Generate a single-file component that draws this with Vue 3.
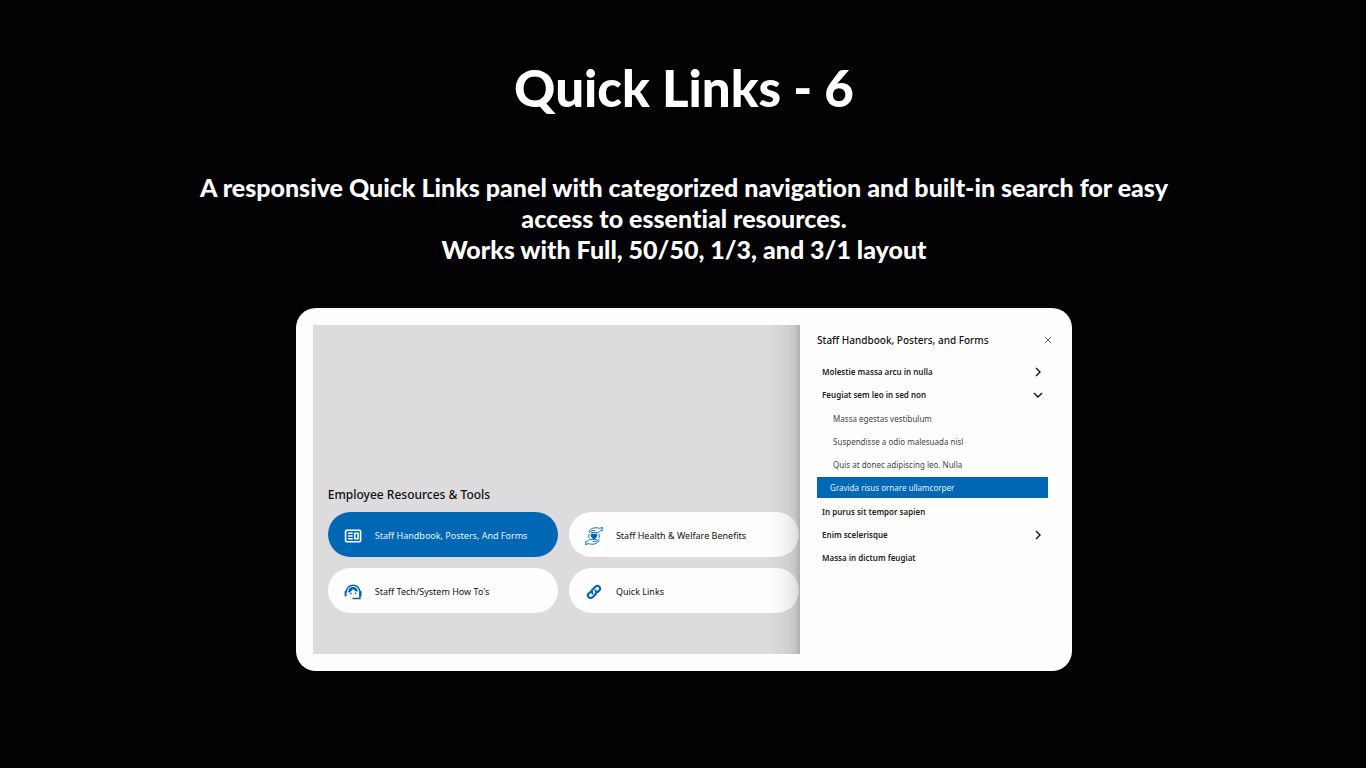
<script setup>
import { ref } from 'vue'

const tiles = ref([
  { icon: 'handbook', label: 'Staff Handbook, Posters, And Forms', active: true },
  { icon: 'health', label: 'Staff Health & Welfare Benefits' },
  { icon: 'support', label: "Staff Tech/System How To's" },
  { icon: 'link', label: 'Quick Links' },
])

const sections = ref([
  { label: 'Molestie massa arcu in nulla', expandable: true },
  {
    label: 'Feugiat sem leo in sed non',
    expandable: true,
    open: true,
    children: [
      { label: 'Massa egestas vestibulum' },
      { label: 'Suspendisse a odio malesuada nisl' },
      { label: 'Quis at donec adipiscing leo. Nulla' },
      { label: 'Gravida risus ornare ullamcorper', active: true },
    ],
  },
  { label: 'In purus sit tempor sapien' },
  { label: 'Enim scelerisque', expandable: true },
  { label: 'Massa in dictum feugiat' },
])
</script>

<template>
  <main class="page">
    <h1 class="title">Quick Links - 6</h1>
    <p class="intro">
      A responsive Quick Links panel with categorized navigation and built-in search for easy access to essential resources.<br />
      Works with Full, 50/50, 1/3, and 3/1 layout
    </p>

    <div class="card">
      <section class="resources">
        <h2 class="resources-title">Employee Resources &amp; Tools</h2>
        <div class="tiles">
          <button
            v-for="tile in tiles"
            :key="tile.label"
            type="button"
            class="tile"
            :class="{ active: tile.active }"
          >
            <svg v-if="tile.icon === 'handbook'" class="icon" viewBox="0 0 18 18" fill="none" stroke="currentColor">
              <rect x="1.6" y="3.3" width="15" height="11.4" rx="1" stroke-width="1.6" />
              <path d="M4 6.3h4.800M4 9h4.800M4 11.700h4.800" stroke-width="1.400" />
              <rect x="10.8" y="6.3" width="3.2" height="5.4" stroke-width="1.5" />
            </svg>
            <svg v-else-if="tile.icon === 'health'" class="icon" viewBox="0 0 18 18" fill="none" stroke="currentColor" stroke-linecap="round" stroke-linejoin="round">
              <path fill="currentColor" stroke="none" d="M9 12.600C7 11.100 5.700 9.900 5.700 8.300 5.700 6.300 8.100 5.900 9 7.400 9.900 5.900 12.300 6.300 12.300 8.300 12.300 9.900 11 11.100 9 12.600z" />
              <g id="helping-hand" stroke-width="0.9">
                <path d="M17.200.6v3l-1.900.2c-1.200 1.500-2.500 1.900-4.500 1.800H6.500M17.200.6l-2.600.7C11.800.5 8.400.5 6.300 1.900L4 4.100c-.6.900.4 1.300 1.300.7L7 3.600h3" />
              </g>
              <use href="#helping-hand" transform="rotate(180 9 9)" />
              <path d="M4.300 6.900c-.9 1.400-.9 2.900-.1 4.200M13.700 6.900c.9 1.400.9 2.900.1 4.200" stroke-width="0.9" />
            </svg>
            <svg v-else-if="tile.icon === 'support'" class="icon" viewBox="0 0 18 18" fill="none" stroke="currentColor">
              <path d="M2.300 9.500V9a6.800 6.800 0 0 1 13.600 0v6.500H8.500" stroke-width="1.500" />
              <path d="M1.600 8.800v3.700M16.600 8.800v3.700" stroke-width="2" stroke-linecap="round" />
              <path fill="currentColor" stroke="none" d="M4.300 9.800C4 6 6.200 4 9.100 4c2.500 0 4.500 1.700 4.900 4.500-2.100 0-3.900-.9-5.100-2.600C8.100 7.700 6.500 9.100 4.300 9.800z" />
              <circle cx="6.900" cy="10.300" r="0.900" fill="currentColor" stroke="none" />
              <circle cx="11.500" cy="10.300" r="0.900" fill="currentColor" stroke="none" />
            </svg>
            <svg v-else class="icon" viewBox="0 0 18 18" fill="none" stroke="currentColor" stroke-width="2.100" stroke-linecap="round">
              <path d="M7.600 10.400c-1.100-1.100-1.100-2.700 0-3.800l2.900-2.900c1.100-1.100 2.700-1.100 3.800 0s1.100 2.700 0 3.800l-1.600 1.600" />
              <path d="M10.400 7.600c1.100 1.100 1.100 2.700 0 3.800l-2.900 2.900c-1.100 1.100-2.700 1.100-3.800 0s-1.100-2.700 0-3.800l1.600-1.600" />
            </svg>
            <span>{{ tile.label }}</span>
          </button>
        </div>
      </section>

      <aside class="drawer">
        <header class="drawer-head">
          <h2 class="drawer-title">Staff Handbook, Posters, and Forms</h2>
          <button type="button" class="close" aria-label="Close">
            <svg viewBox="0 0 8 8" fill="none" stroke="currentColor"><path d="M.8.8l6.400 6.400M7.200.8.8 7.200" stroke-width="0.8" /></svg>
          </button>
        </header>
        <ul class="list">
          <li v-for="section in sections" :key="section.label">
            <button v-if="section.expandable" type="button" class="row" :aria-expanded="!!section.open">
              <span>{{ section.label }}</span>
              <svg class="chevron" :class="{ open: section.open }" viewBox="0 0 10 10" fill="none" stroke="currentColor">
                <path d="M3 1l4 4-4 4" stroke-width="1.400" />
              </svg>
            </button>
            <a v-else href="#" class="row">{{ section.label }}</a>
            <ul v-if="section.open" class="sublist">
              <li v-for="child in section.children" :key="child.label">
                <a href="#" class="subrow" :class="{ active: child.active }">{{ child.label }}</a>
              </li>
            </ul>
          </li>
        </ul>
      </aside>
    </div>
  </main>
</template>

<style>
body {
  background: #020104;
}
</style>

<style scoped>
.page {
  box-sizing: border-box;
  min-height: 100vh;
  padding: 58px 24px 24px 26px;
  display: flex;
  flex-direction: column;
  align-items: center;
  background: #020104;
  color: #fff;
  font-family: "Noto Sans", "Open Sans", sans-serif;
}
h1, h2, p, ul {
  margin: 0;
  padding: 0;
}
ul {
  list-style: none;
}
button {
  margin: 0;
  border: 0;
  font: inherit;
  text-align: left;
  cursor: pointer;
}
a {
  text-decoration: none;
}
.title {
  font: 900 51px/60px Lato, sans-serif;
}
.intro {
  max-width: 1020px;
  margin-top: 54px;
  text-align: center;
  font: 900 25px/31px Lato, sans-serif;
  font-variant-ligatures: none;
}
.card {
  box-sizing: border-box;
  width: 59%;
  margin-top: 43px;
  padding: 17px;
  display: grid;
  grid-template-columns: 487fr 255fr;
  background: #fefefe;
  border-radius: 20px;
  color: #111;
}
.resources {
  position: relative;
  box-sizing: border-box;
  min-height: 329px;
  padding: 15px 1px 41px 15px;
  display: flex;
  flex-direction: column;
  justify-content: flex-end;
  background: #dddbde;
}
.resources::after {
  content: "";
  position: absolute;
  inset: 0 0 0 auto;
  width: 32px;
  background: linear-gradient(to right, rgba(0, 0, 0, 0), rgba(0, 0, 0, 0.05) 60%, rgba(0, 0, 0, 0.1) 85%, rgba(0, 0, 0, 0.2));
  pointer-events: none;
}
.resources-title {
  font-size: 12px;
  line-height: 18px;
  font-weight: 500;
}
.tiles {
  margin-top: 8px;
  display: grid;
  grid-template-columns: repeat(2, minmax(0, 1fr));
  gap: 11px;
}
.tile {
  height: 45px;
  padding: 2px 16px 0;
  display: flex;
  align-items: center;
  gap: 13px;
  border-radius: 23px;
  background: #fefefe;
  color: #111;
  font-size: 9px;
  line-height: 16px;
  white-space: nowrap;
}
.tile.active {
  background: #0067b5;
  color: #e8f3fb;
}
.icon {
  width: 18px;
  height: 18px;
  flex: none;
  color: #0064b0;
}
.active .icon {
  color: #fff;
}
.drawer {
  padding: 5px 3px 0 17px;
}
.drawer-head {
  display: flex;
  align-items: center;
  justify-content: space-between;
}
.drawer-title {
  font-size: 10px;
  line-height: 20px;
  font-weight: 500;
  white-space: nowrap;
}
.close {
  padding: 0;
  background: none;
  color: #444;
  display: flex;
}
.close svg {
  width: 8px;
  height: 8px;
}
.list {
  margin: 11px 4px 0 0;
  display: grid;
  gap: 2px;
}
.row {
  box-sizing: border-box;
  width: 100%;
  height: 21px;
  padding: 0 5px;
  display: flex;
  align-items: center;
  justify-content: space-between;
  background: none;
  color: #222;
  font-size: 8px;
  font-weight: 600;
}
.chevron {
  width: 10px;
  height: 10px;
  color: #111;
}
.chevron.open {
  transform: rotate(90deg);
}
.sublist {
  margin: 3px 0 1px;
  display: grid;
  gap: 2px;
}
.subrow {
  height: 21px;
  padding: 0 16px;
  display: flex;
  align-items: center;
  color: #444;
  font-size: 8px;
}
.subrow.active {
  padding: 0 13px;
  background: #0067b5;
  color: #e8f3fb;
}
</style>
